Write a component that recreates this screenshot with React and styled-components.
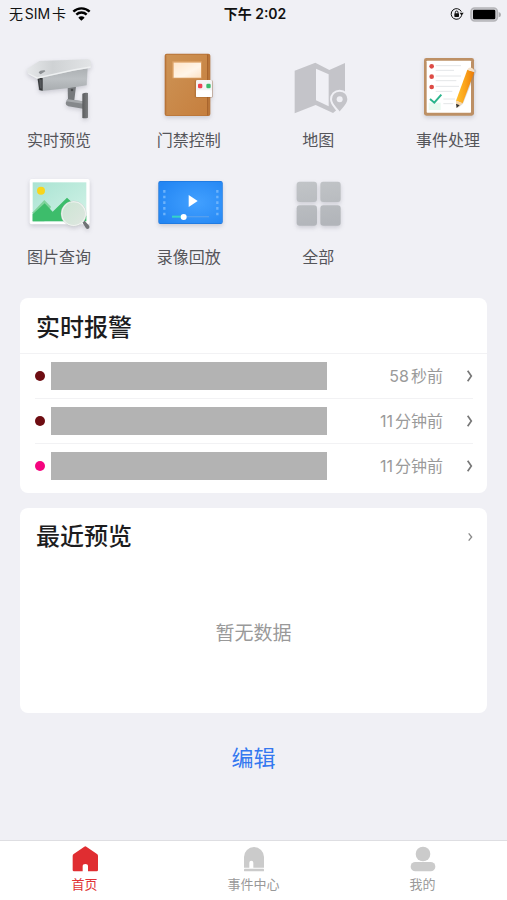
import React from 'react';
import styled, { createGlobalStyle } from 'styled-components';

const GlobalStyle = createGlobalStyle`
  * {
    box-sizing: border-box;
  }

  body {
    margin: 0;
    background: #f0f0f5;
    color: #1c1c1e;
    font-family: Inter, 'Noto Sans CJK SC', sans-serif;
    text-autospace: normal;
  }

  button {
    border: 0;
    padding: 0;
    background: none;
    color: inherit;
    font: inherit;
    cursor: pointer;
  }
`;

const Page = styled.div`
  display: flex;
  flex-direction: column;
  min-height: 100vh;
`;

const StatusBar = styled.header`
  display: grid;
  grid-template-columns: 1fr auto 1fr;
  align-items: center;
  height: 28px;
  padding: 0 6px 0 9px;
  color: #111;
  font-size: 14px;
  line-height: 20px;
`;

const StatusGroup = styled.div`
  display: flex;
  align-items: center;
  justify-content: ${props => (props.$end ? 'flex-end' : 'flex-start')};
  gap: 6px;
`;

const Clock = styled.div`
  font-weight: 600;
`;

const Menu = styled.nav`
  display: grid;
  grid-template-columns: repeat(4, 66px);
  justify-content: space-between;
  row-gap: 20px;
  padding: 27px 26px 0;
`;

const MenuItem = styled.button`
  display: flex;
  flex-direction: column;
  align-items: center;
  gap: 7px;
  color: #55555a;
  font-size: 16px;
  line-height: 24px;
  white-space: nowrap;
`;

const MenuIcon = styled.svg`
  display: block;
  width: 66px;
  height: 66px;
  overflow: visible;
  filter: ${props => (props.$flat ? 'none' : 'drop-shadow(0 2px 2px rgba(60, 60, 80, 0.2))')};
`;

const Content = styled.main`
  display: flex;
  flex-direction: column;
  align-items: center;
  gap: 15px;
  padding: 29px 20px 24px;
`;

const Card = styled.section`
  width: 100%;
  border-radius: 8px;
  background: #fff;
`;

const CardHeader = styled.div`
  display: flex;
  align-items: center;
  justify-content: space-between;
  height: 56px;
  padding: ${props => (props.$divided ? '4px 16px 0' : '2px 13px 0 16px')};
  border-bottom: ${props => (props.$divided ? '1px solid #f2f2f4' : '0')};
`;

const CardTitle = styled.h2`
  margin: 0;
  font-size: 24px;
  font-weight: 500;
  line-height: 36px;
`;

const AlarmList = styled.ul`
  margin: 0;
  padding: 0 14px 4px 15px;
  list-style: none;
`;

const AlarmItem = styled.li`
  border-bottom: 1px solid #f2f2f4;

  &:last-child {
    border-color: transparent;
  }
`;

const AlarmButton = styled.button`
  display: flex;
  align-items: center;
  width: 100%;
  height: 44px;
`;

const Dot = styled.span`
  width: 10px;
  height: 10px;
  margin-right: 6px;
  border-radius: 50%;
  background: ${props => props.$color};
`;

const Masked = styled.span`
  flex: 1;
  height: 28px;
  background: #b3b3b3;
`;

const Time = styled.span`
  width: 116px;
  margin-right: 22px;
  color: #9a9a9a;
  font-size: 16px;
  line-height: 24px;
  text-align: right;
`;

const Arrow = styled.svg`
  display: block;
  width: 8px;
  height: 12px;
`;

const Empty = styled.p`
  margin: 0;
  padding: 56px 0 65px;
  color: #999;
  font-size: 19px;
  line-height: 28px;
  text-align: center;
`;

const EditButton = styled.button`
  margin-top: 14px;
  color: #3478f0;
  font-size: 22px;
  line-height: 32px;
`;

const TabBar = styled.nav`
  position: sticky;
  bottom: 0;
  display: grid;
  grid-template-columns: repeat(3, 1fr);
  height: 60px;
  margin-top: auto;
  border-top: 1px solid #dedee2;
  background: #fff;
`;

const Tab = styled.a`
  display: flex;
  flex-direction: column;
  align-items: center;
  gap: 2px;
  padding-top: 5px;
  color: ${props => (props.$active ? '#e03236' : '#999')};
  font-size: 13px;
  line-height: 20px;
  text-decoration: none;
`;

const TabIcon = styled.svg`
  display: block;
  width: 26px;
  height: 26px;
  fill: ${props => (props.$active ? '#e02d31' : '#cbcbcb')};
`;

const CameraIcon = () => (
  <MenuIcon viewBox="78 165 198 198" aria-hidden="true">
    <defs>
      <linearGradient id="roof" x1="0" y1="0" x2="1" y2="0">
        <stop offset="0" stopColor="#e6e8ea" />
        <stop offset="0.4" stopColor="#cfd2d4" />
        <stop offset="1" stopColor="#e2e4e6" />
      </linearGradient>
      <linearGradient id="shell" x1="0" y1="0" x2="0" y2="1">
        <stop offset="0" stopColor="#a9adb0" />
        <stop offset="0.5" stopColor="#bcc0c3" />
        <stop offset="1" stopColor="#a8acaf" />
      </linearGradient>
      <linearGradient id="plate" x1="0" y1="0" x2="1" y2="0">
        <stop offset="0" stopColor="#5a5c5e" />
        <stop offset="1" stopColor="#7b7d7f" />
      </linearGradient>
    </defs>
    <path d="M203 260h25l-5 40h-19z" fill="#76797c" />
    <circle cx="216" cy="270" r="4" fill="#4a4c4e" />
    <path d="M202 298l47 6v22l-44-7q-8-2-8-10z" fill="#85888b" />
    <path d="M202 298l47 6v7l-50-7z" fill="#a7aaad" />
    <path d="M247 281q8-4 17-2v74q-8 3-17 1z" fill="url(#plate)" />
    <path d="M112 231l151-31-3 56-53 8-82 9-9-3z" fill="url(#shell)" />
    <path d="M112 232l16 2v38l-10-2z" fill="#36383a" />
    <path d="M117 238l8 1v27l-5-1z" fill="#54575a" />
    <path d="M81 207l37-24 145-5q9 1 10 7v18l-53 9-109 24-25-13q-4-2-5-16z" fill="url(#roof)" />
    <path d="M84 219l28 13 108-24 52-9v4l-52 9-109 24-25-13z" fill="#eef0f1" />
    <path d="M116 218q4-8 18-7l2 3-14 9z" fill="#8b8f92" />
  </MenuIcon>
);

const DoorIcon = () => (
  <MenuIcon viewBox="467 165 198 198" aria-hidden="true">
    <defs>
      <linearGradient id="door" x1="0" y1="0" x2="1" y2="1">
        <stop offset="0" stopColor="#cd9355" />
        <stop offset="1" stopColor="#c67f3e" />
      </linearGradient>
      <linearGradient id="pane" x1="0" y1="0" x2="1" y2="1">
        <stop offset="0" stopColor="#ffe6cb" />
        <stop offset="0.6" stopColor="#fff5e9" />
        <stop offset="1" stopColor="#fde3c6" />
      </linearGradient>
    </defs>
    <rect x="493" y="161" width="137" height="187" rx="6" fill="#b87438" />
    <rect x="498" y="164" width="122" height="182" rx="2" fill="url(#door)" />
    <rect x="620" y="164" width="3" height="182" fill="#a9652d" />
    <rect x="516" y="184" width="88" height="51" fill="#dfa66c" />
    <rect x="520" y="188" width="82" height="45" fill="url(#pane)" />
    <rect x="583" y="241" width="55" height="52" rx="4" fill="#8f5526" opacity="0.35" />
    <rect x="587" y="240" width="48" height="51" rx="4" fill="#f4f4f4" />
    <rect x="587" y="271" width="48" height="20" rx="3" fill="#fff" />
    <rect x="593" y="251" width="13" height="14" rx="4" fill="#f04452" />
    <rect x="618" y="251" width="13" height="14" rx="4" fill="#3cba6c" />
  </MenuIcon>
);

const MapIcon = () => (
  <MenuIcon $flat viewBox="94 165 198 198" aria-hidden="true">
    <path d="M123 212l62-24 42 22 47-21v120l-36 30-52-24-63 25z" fill="#c4c4c9" />
    <path d="M187 206l38 17v96l-38-18z" fill="#f0f0f5" />
    <path
      d="M258 272c-15 0-26 11-26 26 0 16 13 24 26 41 13-17 26-25 26-41 0-15-11-26-26-26z"
      fill="#c4c4c9"
      stroke="#f0f0f5"
      strokeWidth="6"
    />
    <circle cx="258" cy="298" r="9" fill="#f0f0f5" />
  </MenuIcon>
);

const EventIcon = () => (
  <MenuIcon viewBox="483 165 198 198" aria-hidden="true">
    <defs>
      <linearGradient id="pencil" x1="0" y1="0" x2="1" y2="0">
        <stop offset="0" stopColor="#ffc02e" />
        <stop offset="0.5" stopColor="#fba31a" />
        <stop offset="1" stopColor="#ea7a08" />
      </linearGradient>
    </defs>
    <rect x="510" y="174" width="150" height="173" rx="7" fill="#bd9065" />
    <rect x="518" y="182" width="133" height="156" rx="2" fill="#fff" />
    <path
      d="M545 197h76M545 211h55M545 228h76M545 242h62M545 259h70M545 274h50M568 297h35M568 311h30"
      stroke="#e4e6e8"
      strokeWidth="3"
    />
    <g fill="#dd4b45">
      <circle cx="533" cy="199" r="7" />
      <circle cx="533" cy="230" r="7" />
      <circle cx="533" cy="261" r="7" />
    </g>
    <path d="M524 308h36v22h-36z" fill="#e9f9f0" />
    <path d="M528 297l13 11 21-24" fill="none" stroke="#2bb58c" strokeWidth="6" />
    <path d="M613 323l14-12 40-98-5-8z" fill="#777" opacity="0.25" />
    <path d="M640 209l21 8-35 93-20-8z" fill="url(#pencil)" />
    <path d="M606 302l20 8-18 14z" fill="#f6d5a5" />
    <path d="M606 311l11 5-9 8z" fill="#333" />
    <path d="M640 209q4-8 12-6 10 4 9 14z" fill="#f7e2c8" />
  </MenuIcon>
);

const PictureIcon = () => (
  <MenuIcon viewBox="78 36 198 198" aria-hidden="true">
    <defs>
      <linearGradient id="sky" x1="0" y1="0" x2="1" y2="1">
        <stop offset="0" stopColor="#a9e3d2" />
        <stop offset="1" stopColor="#d3f3e8" />
      </linearGradient>
      <linearGradient id="lens" x1="0" y1="0" x2="1" y2="1">
        <stop offset="0" stopColor="#cbe5d3" />
        <stop offset="1" stopColor="#dfe6e0" />
      </linearGradient>
    </defs>
    <rect x="89" y="57" width="180" height="136" rx="6" fill="#fff" />
    <rect x="98" y="67" width="161" height="117" fill="url(#sky)" />
    <circle cx="123" cy="92" r="12" fill="#f8d51b" />
    <path d="M98 157l35-37 20 20-20 44H98z" fill="#7fd39c" />
    <path d="M98 163l36-33 24 25 43-42 58 54v17H98z" fill="#3dbd6b" />
    <path d="M247 187l7-5 14 16q2 7-4 9-5 0-7-4z" fill="#707376" />
    <circle cx="221" cy="161" r="36" fill="url(#lens)" stroke="#f3f5f3" strokeWidth="4" />
    <circle cx="221" cy="161" r="38" fill="none" stroke="#b4bfb8" strokeWidth="1" />
  </MenuIcon>
);

const VideoIcon = () => (
  <MenuIcon viewBox="467 36 198 198" aria-hidden="true">
    <defs>
      <radialGradient id="screen" cx="0.6" cy="0.5" r="0.7">
        <stop offset="0" stopColor="#42a0ff" />
        <stop offset="1" stopColor="#2386f3" />
      </radialGradient>
    </defs>
    <rect x="474" y="63" width="193" height="129" rx="6" fill="#1d76dc" />
    <rect x="476" y="65" width="190" height="125" rx="5" fill="url(#screen)" />
    <path d="M492 90v76M651 90v76" stroke="#6db3fb" strokeWidth="7" strokeDasharray="8 9" />
    <path d="M565 105l27 18-27 18z" fill="#fff" />
    <path d="M550 170h76" stroke="#559fee" strokeWidth="4" />
    <path d="M515 170h35" stroke="#35d3c8" strokeWidth="6" />
    <circle cx="550" cy="171" r="9" fill="#fff" />
  </MenuIcon>
);

const AllIcon = () => (
  <MenuIcon viewBox="94 36 198 198" aria-hidden="true">
    <defs>
      <linearGradient id="tiles" gradientUnits="userSpaceOnUse" x1="150" y1="65" x2="170" y2="198">
        <stop offset="0" stopColor="#c1c4c7" />
        <stop offset="1" stopColor="#b2b5ba" />
      </linearGradient>
    </defs>
    <g fill="url(#tiles)">
      <rect x="129" y="65" width="61" height="61" rx="9" />
      <rect x="200" y="65" width="61" height="61" rx="9" />
      <rect x="129" y="136" width="61" height="61" rx="9" />
      <rect x="200" y="136" width="61" height="61" rx="9" />
    </g>
  </MenuIcon>
);

const WifiIcon = () => (
  <svg width="19" height="14" viewBox="0 0 57 42" aria-hidden="true">
    <path d="M4 14a35 35 0 0 1 49 0M13 23a22 22 0 0 1 31 0" fill="none" stroke="#000" strokeWidth="7" />
    <path d="M28 41l-9-9a13 13 0 0 1 19 0z" fill="#000" />
  </svg>
);

const RotationLockIcon = () => (
  <svg width="14" height="14" viewBox="0 0 42 42" fill="none" aria-hidden="true">
    <path d="M34 14a16 16 0 1 0 1 11" stroke="#111" strokeWidth="3" />
    <path d="M29 17h12l-6 9z" fill="#111" />
    <rect x="13" y="19" width="14" height="11" rx="2" fill="#111" />
    <path d="M16 20v-4a4 4 0 0 1 8 0v4" stroke="#111" strokeWidth="3" />
  </svg>
);

const BatteryIcon = () => (
  <svg width="31" height="15" viewBox="0 0 93 45" aria-hidden="true">
    <rect x="3" y="3" width="79" height="39" rx="11" fill="#d5d5da" stroke="#b4b4b8" strokeWidth="5" />
    <rect x="9" y="8" width="67" height="29" rx="4" fill="#000" />
    <path d="M86 15q7 2 7 8t-7 8z" fill="#ababaf" />
  </svg>
);

const Chevron = ({ small }) => (
  <Arrow viewBox="0 0 24 36" fill="none" aria-hidden="true">
    {small ? (
      <path d="M8 7l9 11-9 11" stroke="#8a8a8a" strokeWidth="4" />
    ) : (
      <path d="M8 2l11 16L8 34" stroke="#777" strokeWidth="5" />
    )}
  </Arrow>
);

const menu = [
  { label: '实时预览', Icon: CameraIcon },
  { label: '门禁控制', Icon: DoorIcon },
  { label: '地图', Icon: MapIcon },
  { label: '事件处理', Icon: EventIcon },
  { label: '图片查询', Icon: PictureIcon },
  { label: '录像回放', Icon: VideoIcon },
  { label: '全部', Icon: AllIcon },
];

const alarms = [
  { id: 1, color: '#6e0d12', time: '58秒前' },
  { id: 2, color: '#6e0d12', time: '11分钟前' },
  { id: 3, color: '#f5047f', time: '11分钟前' },
];

const App = () => (
  <Page>
    <GlobalStyle />
    <StatusBar>
      <StatusGroup>
        <span>无SIM卡</span>
        <WifiIcon />
      </StatusGroup>
      <Clock>下午 2:02</Clock>
      <StatusGroup $end>
        <RotationLockIcon />
        <BatteryIcon />
      </StatusGroup>
    </StatusBar>

    <Menu>
      {menu.map(({ label, Icon }) => (
        <MenuItem key={label} type="button">
          <Icon />
          {label}
        </MenuItem>
      ))}
    </Menu>

    <Content>
      <Card>
        <CardHeader $divided>
          <CardTitle>实时报警</CardTitle>
        </CardHeader>
        <AlarmList>
          {alarms.map(a => (
            <AlarmItem key={a.id}>
              <AlarmButton type="button">
                <Dot $color={a.color} />
                <Masked />
                <Time>{a.time}</Time>
                <Chevron />
              </AlarmButton>
            </AlarmItem>
          ))}
        </AlarmList>
      </Card>

      <Card>
        <CardHeader>
          <CardTitle id="recent">最近预览</CardTitle>
          <button type="button" aria-labelledby="recent">
            <Chevron small />
          </button>
        </CardHeader>
        <Empty>暂无数据</Empty>
      </Card>

      <EditButton type="button">编辑</EditButton>
    </Content>

    <TabBar>
      <Tab href="#home" $active>
        <TabIcon $active viewBox="0 0 78 78" aria-hidden="true">
          <path d="M37 2q3-2 6 0l32 22q3 2 3 6v42q0 4-4 4H48V61q0-7-8-7t-8 7v15H6q-4 0-4-4V30q0-4 3-6z" />
        </TabIcon>
        首页
      </Tab>
      <Tab href="#events">
        <TabIcon viewBox="0 0 78 78" aria-hidden="true">
          <path d="M9 65V33a30 30 0 0 1 60 0v32H37V50q0-6-6-6t-6 6v15z" />
          <rect x="9" y="68" width="60" height="8" rx="2" />
        </TabIcon>
        事件中心
      </Tab>
      <Tab href="#me">
        <TabIcon viewBox="0 0 78 78" aria-hidden="true">
          <circle cx="39" cy="24" r="22" />
          <rect x="2" y="48" width="74" height="28" rx="14" />
        </TabIcon>
        我的
      </Tab>
    </TabBar>
  </Page>
);

export default App;
